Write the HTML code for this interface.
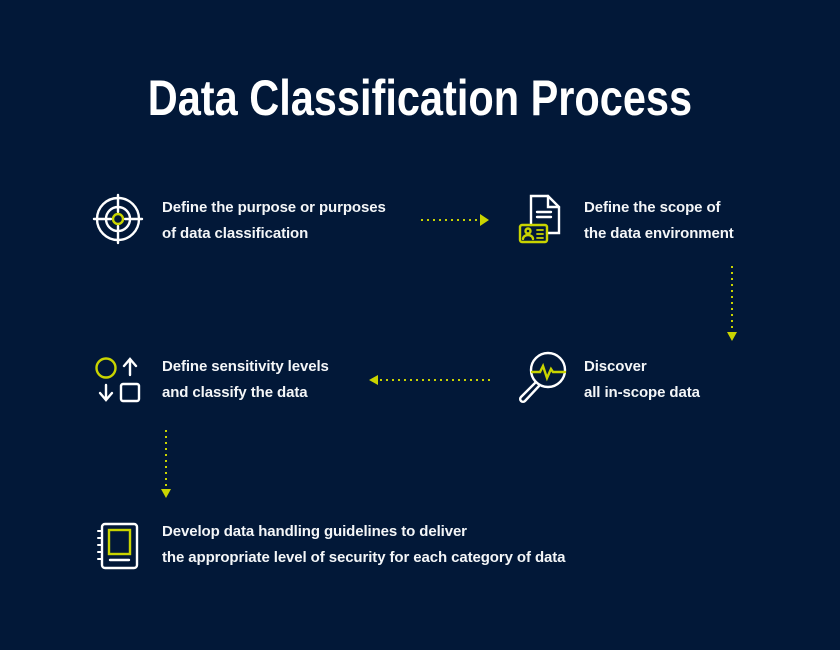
<!DOCTYPE html>
<html><head><style>
body{margin:0;width:840px;height:650px;background:#021838;overflow:hidden;font-family:"Liberation Sans",sans-serif;color:#fff;position:relative}
.t{position:absolute;left:0;top:69px;width:840px;text-align:center;font-size:50px;font-weight:bold;letter-spacing:0px}
.t span{display:inline-block;transform:scaleX(.83)}
.p{position:absolute;font-size:15px;line-height:26px;color:#f4f6f8;font-weight:bold;letter-spacing:-0.1px}
svg{position:absolute}
</style></head><body>
<div class="t"><span>Data Classification Process</span></div>

<svg style="left:0;top:0" width="840" height="650">
<g fill="none" stroke="#fff" stroke-width="2.4" stroke-linecap="round">
<circle cx="118" cy="219" r="21"/><circle cx="118" cy="219" r="12"/>
<line x1="118" y1="195" x2="118" y2="212"/><line x1="118" y1="226" x2="118" y2="243"/>
<line x1="94" y1="219" x2="111" y2="219"/><line x1="125" y1="219" x2="142" y2="219"/>
<path d="M531 225 V196 h17 l11 11 V233 h-12"/><path d="M548 196 v11 h11"/>
<line x1="537" y1="212" x2="551" y2="212"/><line x1="537" y1="217" x2="551" y2="217"/>
<path d="M130 375 V360 M124 366 L130 359 L136 366"/>
<path d="M106 385 V399 M100 393 L106 400 L112 393"/>
<rect x="121" y="384" width="18" height="17" rx="2"/>
<circle cx="548" cy="370" r="17"/>
<path d="M536 382 L521 397 a2.5 2.5 0 0 0 4 4 L539 386"/>
<rect x="102" y="524" width="35" height="44" rx="3"/>
<path d="M98 531h4 M98 538h4 M98 545h4 M98 552h4 M98 559h4" stroke-width="2"/>
<line x1="110" y1="560" x2="129" y2="560"/>
</g>
<g fill="none" stroke="#c9d400" stroke-width="2.4" stroke-linecap="round">
<circle cx="118" cy="219" r="5"/>
<rect x="520" y="225" width="27" height="17" rx="2"/>
<circle cx="528" cy="231" r="2.5"/><path d="M523 239 a5 4 0 0 1 10 0"/>
<path d="M537 230h6 M537 234h6 M537 238h6" stroke-width="1.8"/>
<circle cx="106" cy="368" r="9.5"/>
<path d="M532 372 h8 l3 -6 l4 12 l4 -9 l2 3 h12"/>
<rect x="109" y="530" width="21" height="24"/>
</g>
<g fill="#c9d400">
<g stroke="#c9d400" stroke-width="2" stroke-dasharray="2 4">
<line x1="421" y1="220" x2="480" y2="220"/>
<line x1="732" y1="266" x2="732" y2="332"/>
<line x1="490" y1="380" x2="378" y2="380"/>
<line x1="166" y1="430" x2="166" y2="489"/>
</g>
<polygon points="480,214 489,220 480,226"/>
<polygon points="727,332 737,332 732,341"/>
<polygon points="378,375 378,385 369,380"/>
<polygon points="161,489 171,489 166,498"/>
</g>
</svg>

<div class="p" style="left:162px;top:195px">Define the purpose or purposes<br>of data classification</div>
<div class="p" style="left:584px;top:195px">Define the scope of<br>the data environment</div>
<div class="p" style="left:162px;top:354px">Define sensitivity levels<br>and classify the data</div>
<div class="p" style="left:584px;top:354px">Discover<br>all in-scope data</div>
<div class="p" style="left:162px;top:519px">Develop data handling guidelines to deliver<br>the appropriate level of security for each category of data</div>
</body></html>
